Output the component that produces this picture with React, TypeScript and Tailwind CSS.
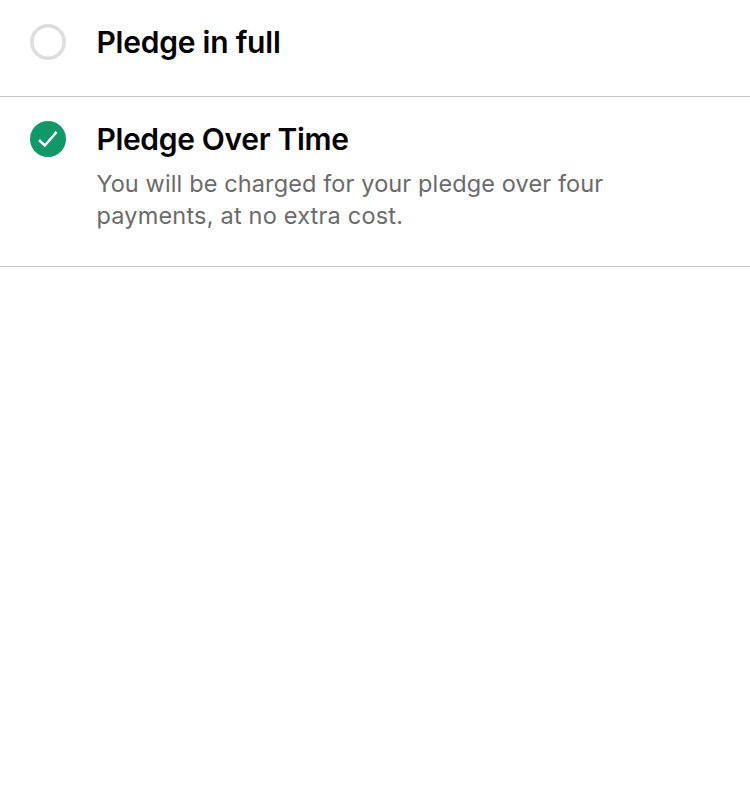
import React from "react";

function EmptyRadio() {
  return (
    <svg className="size-9 shrink-0" viewBox="0 0 36 36" fill="none" aria-hidden="true">
      <circle cx="18" cy="18" r="16.2" stroke="#dcdedd" strokeWidth="3.6" />
    </svg>
  );
}

function CheckedRadio() {
  return (
    <svg className="size-9 shrink-0" viewBox="0 0 36 36" fill="none" aria-hidden="true">
      <circle cx="18" cy="18" r="18" fill="#0f9868" />
      <path d="M9 19 L14.9 24.5 L26.6 10.9" stroke="#fff" strokeWidth="2.5" />
    </svg>
  );
}

export default function App() {
  return (
    <main className="flex h-[800px] w-full flex-col bg-white font-['Inter',sans-serif]">
      <section className="flex h-[97px] items-start gap-[30.4px] border-b border-[#c6c6c6] px-[30px] pt-6">
        <EmptyRadio />
        <h2 className="text-[30px] leading-9 font-semibold tracking-[-0.22px] whitespace-nowrap text-black">Pledge in full</h2>
      </section>
      <section className="flex h-[170px] items-start gap-[30.4px] border-b border-[#c6c6c6] px-[30px] pt-6">
        <CheckedRadio />
        <div className="flex flex-col gap-[11px]">
          <h2 className="text-[30px] leading-9 font-semibold tracking-[-0.33px] whitespace-nowrap text-black">Pledge Over Time</h2>
          <p className="text-[23.5px] leading-8 tracking-[0.12px] whitespace-nowrap text-[#6a6a6a]">
            You will be charged for your pledge over four
            <br />
            <span className="tracking-[0.2px]">payments, at no extra cost.</span>
          </p>
        </div>
      </section>
    </main>
  );
}
